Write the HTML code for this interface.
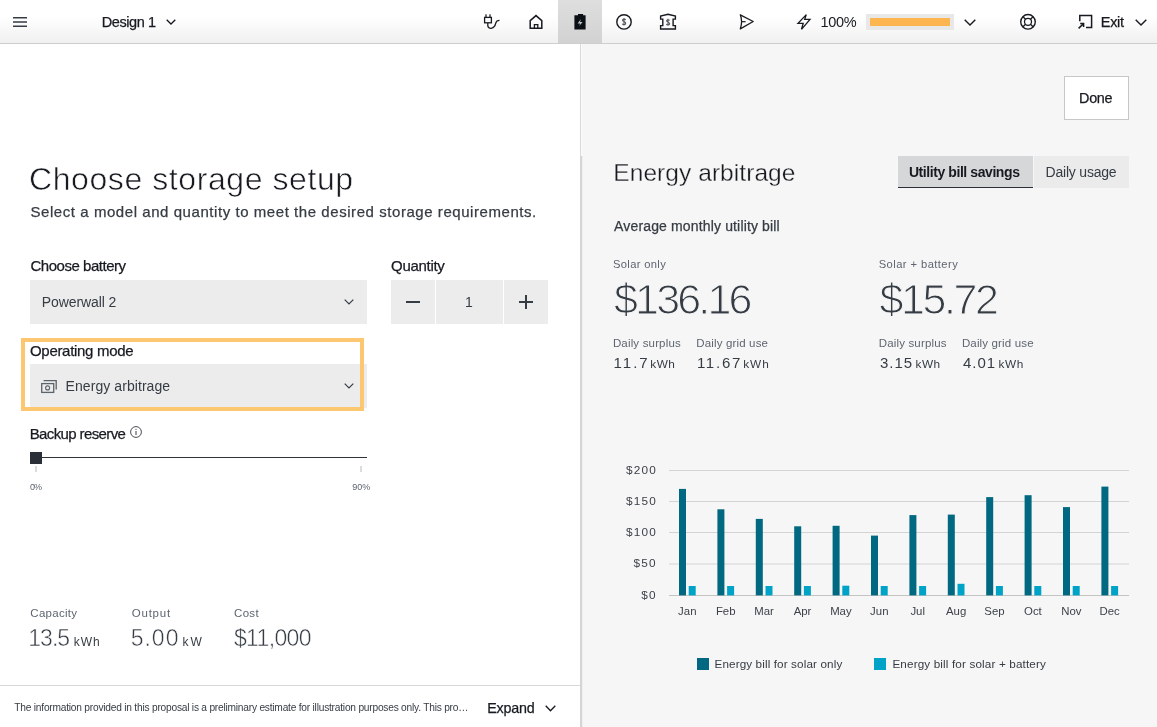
<!DOCTYPE html>
<html><head><meta charset="utf-8">
<style>
*{box-sizing:border-box;margin:0;padding:0}
html,body{width:1157px;height:727px;overflow:hidden;background:#fff;-webkit-font-smoothing:antialiased;font-family:"Liberation Sans",sans-serif;color:#171a20}
.a{position:absolute;white-space:nowrap;line-height:1}
.b{position:absolute}
.med{-webkit-text-stroke:0.25px currentColor}
.thw{-webkit-text-stroke:0.6px #fff}
.thg{-webkit-text-stroke:1.1px #f6f6f6}
.thw2{-webkit-text-stroke:0.5px #fff}
.thg2{-webkit-text-stroke:0.3px #f6f6f6}
svg{position:absolute;overflow:visible}
#wrap{position:absolute;left:0;top:0;width:1157px;height:727px;will-change:transform}
</style></head><body><div id="wrap">
<!-- backgrounds -->
<div class="b" style="left:0;top:0;width:1157px;height:43px;background:linear-gradient(#fff 0%,#fff 38%,#f0f0f0 100%)"></div>
<div class="b" style="left:0;top:43px;width:1157px;height:1px;background:#ccced0"></div>
<div class="b" style="left:558px;top:0;width:44px;height:43px;background:linear-gradient(#dedede,#d2d2d2)"></div>
<div class="b" style="left:581px;top:44px;width:576px;height:683px;background:#f6f6f6"></div>
<div class="b" style="left:580px;top:44px;width:1px;height:112px;background:#d8dadc"></div>
<div class="b" style="left:581px;top:44px;width:1px;height:112px;background:#fbfbfb"></div>
<div class="b" style="left:580px;top:156px;width:2px;height:571px;background:#d3d5d7"></div>
<div class="b" style="left:582px;top:156px;width:1px;height:571px;background:#efefef"></div>

<!-- header -->
<svg style="left:13px;top:17px" width="14" height="10" viewBox="0 0 14 10"><path d="M0 .8H14M0 5H14M0 9.2H14" stroke="#363c44" stroke-width="1.5"/></svg>
<div class="a med" style="left:101.80px;top:15px;font-size:14.5px;letter-spacing:-0.429px">Design 1</div>
<svg style="left:166px;top:19px" width="10" height="6" viewBox="0 0 10 6"><path d="M.7 .7L5 5L9.3 .7" stroke="#171a20" stroke-width="1.3" fill="none"/></svg>

<div class="a" style="left:820.50px;top:15px;font-size:14.5px;letter-spacing:-0.333px">100%</div>
<div class="b" style="left:866px;top:14px;width:88px;height:16px;background:#e8e8e8"></div>
<div class="b" style="left:870px;top:18px;width:80px;height:8px;background:#fdb64f"></div>
<svg style="left:964px;top:18.5px" width="12" height="7" viewBox="0 0 12 7"><path d="M.7 .7L6 6L11.3 .7" stroke="#171a20" stroke-width="1.4" fill="none"/></svg>
<div class="a med" style="left:1100.80px;top:15px;font-size:14.5px;letter-spacing:-0.333px">Exit</div>
<svg style="left:1135px;top:18.5px" width="12" height="7" viewBox="0 0 12 7"><path d="M.7 .7L6 6L11.3 .7" stroke="#171a20" stroke-width="1.4" fill="none"/></svg>

<svg style="left:0;top:0" width="1157" height="44" viewBox="0 0 1157 44" fill="none" stroke="#171a20" stroke-width="1.4">
 <!-- plug -->
 <path d="M486 14.2V17M490 14.2V17" stroke-width="1.2"/>
 <rect x="484.6" y="17.4" width="6.8" height="5.4" stroke-width="1.3"/>
 <path d="M487.8 23V25.6C487.8 28.8 492.6 29.4 494.6 26.2C495.6 24.4 495.6 22.2 497 21C497.8 20.4 498.6 20.3 499.5 20.3" stroke-width="1.3"/>
 <!-- home -->
 <path d="M530.2 28.3V20.6L536 15.6L541.8 20.6V28.3Z" stroke-width="1.5" stroke-linejoin="miter"/>
 <path d="M534.4 28.3V24.6H537.8V28.3" stroke-width="1.3"/>
 <!-- battery -->
 <path d="M574.4 15.3H578V14H583.1V15.3H585.6V29.6H574.4Z" fill="#0b0f16" stroke="none"/>
 <path d="M581 19L577.6 23.5H580.2L579.2 26L582.6 22H580Z" fill="#c4c6c8" stroke="none"/>
 <!-- dollar circle -->
 <circle cx="624" cy="21.9" r="7.2" stroke-width="1.4"/>
 <path d="M625.6 19.9C625.3 19.3 624.7 19 624 19C623.1 19 622.5 19.5 622.5 20.2C622.5 21.9 625.7 21.3 625.7 23.3C625.7 24.1 625 24.7 624 24.7C623.2 24.7 622.6 24.3 622.3 23.7M624 18V25.6" stroke-width="1.1" stroke="#50555c"/>
 <!-- bank -->
 <path d="M660.6 19.1V16.1L668 14.2L675.4 16.1V19.1H673.1V25.6H675.4V29H660.6V25.6H662.8V19.1Z" stroke-width="1.4"/>
 <path d="M669.6 20.5C669.3 19.9 668.8 19.7 668.1 19.7C667.2 19.7 666.6 20.2 666.6 20.8C666.6 22.4 669.7 21.9 669.7 23.7C669.7 24.4 669 24.9 668.1 24.9C667.3 24.9 666.7 24.6 666.4 24M668 18.8V25.8" stroke-width="1.1" stroke="#50555c"/>
 <!-- send -->
 <path d="M740.3 14.8L753.2 21.5L740.3 28.9C741.3 26 741.6 24 741.6 21.8C741.6 19.2 741.2 17.2 740.3 14.8Z" stroke-width="1.3" stroke-linejoin="round"/>
 <path d="M741.8 21.7H745.6" stroke-width="1.2"/>
 <!-- lightning -->
 <path d="M806.3 14.6L798 23.3H803.2L801.5 29.3L810 19.3H804.7Z" stroke-width="1.3" stroke-linejoin="miter"/>
 <!-- lifebuoy -->
 <circle cx="1028" cy="21.8" r="7.3" stroke-width="1.4"/>
 <circle cx="1028" cy="21.8" r="3.5" stroke-width="1.3"/>
 <path d="M1023 16.8L1025.5 19.3M1033 16.8L1030.5 19.3M1023 26.8L1025.5 24.3M1033 26.8L1030.5 24.3" stroke-width="1.3"/>
 <!-- exit -->
 <path d="M1079.8 21.2V15.4H1091.6V27.6H1086" stroke-width="1.5" stroke-linejoin="miter"/>
 <path d="M1078.6 28.4L1083.4 23.8M1080.2 23.6H1083.6V27" stroke-width="1.5"/>
</svg>

<!-- left panel -->
<div class="a thw" style="left:29.00px;top:163px;font-size:32px;letter-spacing:0.579px">Choose storage setup</div>
<div class="a med" style="left:30.50px;top:204px;font-size:15px;color:#363c44;letter-spacing:0.559px">Select a model and quantity to meet the desired storage requirements.</div>

<div class="a med" style="left:30.40px;top:258px;font-size:15px;letter-spacing:-0.462px">Choose battery</div>
<div class="b" style="left:30px;top:280px;width:337px;height:44px;background:#ececec"></div>
<div class="a" style="left:41.80px;top:295px;font-size:14px;color:#363c44;letter-spacing:-0.100px">Powerwall 2</div>
<svg style="left:344px;top:299px" width="10" height="6" viewBox="0 0 10 6"><path d="M.7 .7L5 5L9.3 .7" stroke="#363c44" stroke-width="1.2" fill="none"/></svg>

<div class="a med" style="left:391.00px;top:258px;font-size:15px;letter-spacing:-0.286px">Quantity</div>
<div class="b" style="left:391px;top:280px;width:44px;height:44px;background:#ececec"></div>
<div class="b" style="left:436px;top:280px;width:67px;height:44px;background:#ececec"></div>
<div class="b" style="left:504px;top:280px;width:44px;height:44px;background:#ececec"></div>
<div class="b" style="left:406px;top:301px;width:14px;height:1.5px;background:#363c44"></div>
<div class="b" style="left:519px;top:301px;width:14px;height:1.5px;background:#363c44"></div>
<div class="b" style="left:525.3px;top:295px;width:1.5px;height:14px;background:#363c44"></div>
<div class="a" style="left:465.00px;top:295px;font-size:14px;color:#363c44">1</div>

<div class="b" style="left:21px;top:338px;width:343px;height:73px;border:4px solid #fdc670"></div>
<div class="a med" style="left:30.00px;top:343px;font-size:15px;letter-spacing:-0.308px">Operating mode</div>
<div class="b" style="left:30px;top:364px;width:337px;height:44px;background:#ececec;z-index:-1"></div>
<svg style="left:41px;top:379px" width="16" height="14" viewBox="0 0 16 14"><rect x=".7" y="4.6" width="12" height="8.8" fill="none" stroke="#5d636b" stroke-width="1.3"/><path d="M2.6 1.6H15.2V10.6" fill="none" stroke="#5d636b" stroke-width="1.3"/><circle cx="6.6" cy="8.9" r="2" fill="none" stroke="#5d636b" stroke-width="1.1"/></svg>
<div class="a" style="left:65.60px;top:379px;font-size:14px;color:#363c44;letter-spacing:0.067px">Energy arbitrage</div>
<svg style="left:344px;top:383px" width="10" height="6" viewBox="0 0 10 6"><path d="M.7 .7L5 5L9.3 .7" stroke="#363c44" stroke-width="1.2" fill="none"/></svg>

<div class="a med" style="left:29.70px;top:426px;font-size:15px;letter-spacing:-0.615px">Backup reserve</div>
<svg style="left:130px;top:426px" width="12" height="12" viewBox="0 0 12 12"><circle cx="6" cy="6" r="5.4" fill="none" stroke="#363c44" stroke-width="0.9"/><path d="M6 5V9" stroke="#363c44" stroke-width="1"/><circle cx="6" cy="3.3" r=".6" fill="#363c44"/></svg>
<div class="b" style="left:36px;top:457px;width:331px;height:1px;background:#2f3339"></div>
<div class="b" style="left:30px;top:451.5px;width:12px;height:12px;background:#2b3038"></div>
<div class="b" style="left:35px;top:466px;width:2px;height:6px;background:#dcdcdc"></div>
<div class="b" style="left:360px;top:466px;width:2px;height:6px;background:#dcdcdc"></div>
<div class="a" style="left:30.00px;top:483px;font-size:9px;color:#5e6570;letter-spacing:-1.000px">0%</div>
<div class="a" style="left:352.30px;top:483px;font-size:9px;color:#5e6570">90%</div>

<div class="a" style="left:30.30px;top:608px;font-size:11.5px;color:#5e6570;letter-spacing:0.286px">Capacity</div>
<div class="a" style="left:131.70px;top:608px;font-size:11.5px;color:#5e6570;letter-spacing:0.800px">Output</div>
<div class="a" style="left:234.00px;top:608px;font-size:11.5px;color:#5e6570;letter-spacing:0.333px">Cost</div>
<div class="a thw2" style="left:28.30px;top:627px;font-size:23px;color:#363c44;letter-spacing:-1.000px">13.5</div>
<div class="a" style="left:73.80px;top:636px;font-size:12px;color:#363c44;letter-spacing:1.000px">kWh</div>
<div class="a thw2" style="left:130.70px;top:627px;font-size:23px;color:#363c44;letter-spacing:1.000px">5.00</div>
<div class="a" style="left:182.40px;top:636px;font-size:12px;color:#363c44;letter-spacing:2.000px">kW</div>
<div class="a thw2" style="left:234.00px;top:627px;font-size:23px;color:#363c44;letter-spacing:-0.667px">$11,000</div>

<div class="b" style="left:0;top:685px;width:580px;height:1px;background:#d7d7d7"></div>
<div class="a" style="left:14.30px;top:703px;font-size:10.2px;color:#363c44;letter-spacing:-0.222px">The information provided in this proposal is a preliminary estimate for illustration purposes only. This pro…</div>
<div class="a med" style="left:487.20px;top:701px;font-size:14.3px;letter-spacing:-0.200px">Expand</div>
<svg style="left:545px;top:705px" width="11" height="7" viewBox="0 0 11 7"><path d="M.7 .7L5.5 5.8L10.3 .7" stroke="#171a20" stroke-width="1.3" fill="none"/></svg>

<!-- right panel -->
<div class="b" style="left:1064px;top:76px;width:65px;height:44px;background:#fff;border:1px solid #c6c7c8"></div>
<div class="a med" style="left:1079.10px;top:91px;font-size:14.4px;letter-spacing:-0.333px">Done</div>

<div class="a thg2" style="left:613.30px;top:161px;font-size:24.5px;letter-spacing:0.067px">Energy arbitrage</div>
<div class="b" style="left:898px;top:156px;width:135px;height:32px;background:#d6d7d9"></div>
<div class="b" style="left:898px;top:186.5px;width:135px;height:1.5px;background:#2b3038"></div>
<div class="b" style="left:1034px;top:156px;width:95px;height:32px;background:#ebebeb"></div>
<div class="a" style="left:908.90px;top:165px;font-size:14px;font-weight:bold;letter-spacing:-0.421px">Utility bill savings</div>
<div class="a" style="left:1045.50px;top:165px;font-size:14px;color:#363c44;letter-spacing:-0.200px">Daily usage</div>

<div class="a med" style="left:614.10px;top:219px;font-size:14px;color:#363c44;letter-spacing:0.148px">Average monthly utility bill</div>

<div class="a" style="left:613.00px;top:259px;font-size:11.2px;color:#5e6570;letter-spacing:0.333px">Solar only</div>
<div class="a thg" style="left:614.00px;top:278px;font-size:43px;color:#363c44;letter-spacing:-2.833px">$136.16</div>
<div class="a" style="left:612.90px;top:338px;font-size:11.5px;color:#5e6570;letter-spacing:0.167px">Daily surplus</div>
<div class="a" style="left:696.30px;top:338px;font-size:11.5px;color:#5e6570;letter-spacing:0.154px">Daily grid use</div>
<div class="a" style="left:613.60px;top:355px;font-size:15px;color:#363c44;letter-spacing:2.000px">11.7</div>
<div class="a" style="left:650.30px;top:359px;font-size:11.8px;color:#363c44;letter-spacing:0.500px">kWh</div>
<div class="a" style="left:696.90px;top:355px;font-size:15px;color:#363c44;letter-spacing:1.750px">11.67</div>
<div class="a" style="left:743.20px;top:359px;font-size:11.8px;color:#363c44;letter-spacing:1.000px">kWh</div>

<div class="a" style="left:878.70px;top:259px;font-size:11.2px;color:#5e6570;letter-spacing:0.429px">Solar + battery</div>
<div class="a thg" style="left:879.50px;top:278px;font-size:43px;color:#363c44;letter-spacing:-2.400px">$15.72</div>
<div class="a" style="left:878.70px;top:338px;font-size:11.5px;color:#5e6570;letter-spacing:0.167px">Daily surplus</div>
<div class="a" style="left:961.90px;top:338px;font-size:11.5px;color:#5e6570;letter-spacing:0.154px">Daily grid use</div>
<div class="a" style="left:880.00px;top:355px;font-size:15px;color:#363c44;letter-spacing:1.000px">3.15</div>
<div class="a" style="left:915.50px;top:359px;font-size:11.8px;color:#363c44;letter-spacing:0.500px">kWh</div>
<div class="a" style="left:963.00px;top:355px;font-size:15px;color:#363c44;letter-spacing:1.000px">4.01</div>
<div class="a" style="left:998.60px;top:359px;font-size:11.8px;color:#363c44;letter-spacing:0.500px">kWh</div>

<!-- chart -->
<svg style="left:0;top:0" width="1157" height="727" viewBox="0 0 1157 727">
 <g stroke="#d4d4d4" stroke-width="1">
  <path d="M669 470.5H1129M669 501.5H1129M669 532.5H1129M669 564H1129"/>
 </g>
 <path d="M669 595.5H1129" stroke="#c4c4c4" stroke-width="1"/>
 <g fill="#3d424a" font-size="11.8" font-family="Liberation Sans" letter-spacing="1.15">
  <text x="626" y="473.9">$200</text><text x="626" y="504.9">$150</text><text x="626" y="535.9">$100</text><text x="633.6" y="567.4">$50</text><text x="641.2" y="598.9">$0</text>
 </g>
 <g fill="#006880"><rect x="679.0" y="488.9" width="7" height="106.5"/><rect x="717.4" y="509.3" width="7" height="86.1"/><rect x="755.8" y="518.9" width="7" height="76.5"/><rect x="794.2" y="526.3" width="7" height="69.1"/><rect x="832.6" y="525.8" width="7" height="69.6"/><rect x="871.0" y="535.6" width="7" height="59.8"/><rect x="909.4" y="515.1" width="7" height="80.3"/><rect x="947.8" y="514.6" width="7" height="80.8"/><rect x="986.2" y="497.1" width="7" height="98.3"/><rect x="1024.6" y="495.2" width="7" height="100.2"/><rect x="1063.0" y="507.1" width="7" height="88.3"/><rect x="1101.4" y="486.6" width="7" height="108.8"/></g>
 <g fill="#00a3c8"><rect x="688.7" y="586.0" width="7" height="9.4"/><rect x="727.1" y="586.0" width="7" height="9.4"/><rect x="765.5" y="586.0" width="7" height="9.4"/><rect x="803.9" y="586.0" width="7" height="9.4"/><rect x="842.3" y="585.7" width="7" height="9.7"/><rect x="880.7" y="586.0" width="7" height="9.4"/><rect x="919.1" y="586.0" width="7" height="9.4"/><rect x="957.5" y="583.8" width="7" height="11.6"/><rect x="995.9" y="586.0" width="7" height="9.4"/><rect x="1034.3" y="586.0" width="7" height="9.4"/><rect x="1072.7" y="586.0" width="7" height="9.4"/><rect x="1111.1" y="586.0" width="7" height="9.4"/></g>
 <g fill="#3d424a" font-size="11.4" font-family="Liberation Sans" text-anchor="middle"><text x="687.3" y="615.2">Jan</text><text x="725.7" y="615.2">Feb</text><text x="764.1" y="615.2">Mar</text><text x="802.5" y="615.2">Apr</text><text x="840.9" y="615.2">May</text><text x="879.3" y="615.2">Jun</text><text x="917.7" y="615.2">Jul</text><text x="956.1" y="615.2">Aug</text><text x="994.5" y="615.2">Sep</text><text x="1032.9" y="615.2">Oct</text><text x="1071.3" y="615.2">Nov</text><text x="1109.7" y="615.2">Dec</text></g>
 <rect x="697" y="658" width="12" height="12" fill="#006880"/>
 <rect x="874" y="658" width="12" height="12" fill="#00a3c8"/>

</svg>
<div class="a" style="left:714.50px;top:658px;font-size:11.7px;color:#363c44;letter-spacing:0.120px">Energy bill for solar only</div>
<div class="a" style="left:892.40px;top:658px;font-size:11.7px;color:#363c44;letter-spacing:0.147px">Energy bill for solar + battery</div>
</div></body></html>
